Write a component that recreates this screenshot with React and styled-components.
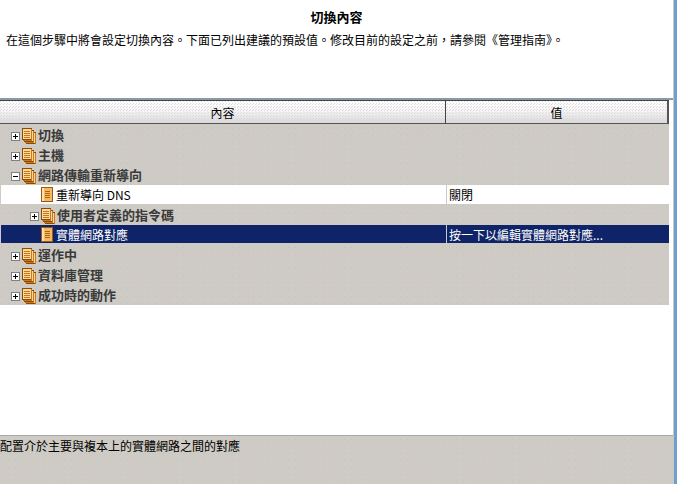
import React from "react";
import styled, { createGlobalStyle } from "styled-components";

const Global = createGlobalStyle`
  html, body { margin: 0; padding: 0; background: #fff; overflow: hidden; }
  * { box-sizing: border-box; }
`;

const speck = (c, x, y) => `radial-gradient(circle at ${x}.5px ${y}.5px, ${c} 0.7px, transparent 0.71px)`;

const dither = `
  background-color: #cdcbc3;
  background-image:
    ${speck("#e0c4cf", 0, 0)},
    ${speck("#c2d2c6", 2, 1)},
    ${speck("#d9c2c2", 3, 4)},
    ${speck("#bcc6c8", 1, 3)};
  background-size: 5px 5px, 5px 5px, 7px 7px, 7px 7px;
`;

const Page = styled.div`
  width: 677px;
  height: 484px;
  display: flex;
  font-family: "Noto Sans CJK TC", "Liberation Sans", sans-serif;
  font-size: 12px;
  color: #000;
`;
const Main = styled.div`
  width: 674px;
  display: flex;
  flex-direction: column;
  border-right: 1px solid #c8c8c4;
`;
const Edge = styled.div`
  width: 3px;
  background: #6f9fcf;
`;
const Intro = styled.div`
  height: 98px;
  padding: 7px 6px 0;
`;
const Title = styled.div`
  height: 19px;
  line-height: 19px;
  text-align: center;
  font-weight: 700;
  font-size: 13px;
`;
const Lead = styled.div`
  margin-top: 5px;
  line-height: 18px;
  white-space: nowrap;
`;
const Rule = styled.div`
  height: 2px;
  background: #8a99a8;
`;
const Body = styled.div`
  flex: 1;
  width: 669px;
  display: flex;
  flex-direction: column;
`;
const Header = styled.div`
  display: grid;
  grid-template-columns: 445px 1px 1fr;
  height: 25px;
  border-top: 1px solid #45454a;
  ${dither}
`;
const HeadCell = styled.div`
  height: 23px;
  line-height: 23px;
  text-align: center;
  background-color: #f0eef0;
  background-image:
    ${speck("#e4d8e0", 0, 0)},
    ${speck("#d8e0dc", 1, 2)},
    linear-gradient(#ffffff 0%, #f6f4f6 45%, #d8d8d8 100%);
  background-size: 3px 3px, 3px 3px, 100% 100%;
  border-bottom: 1px solid #555;
  border-right: ${(p) => (p.$last ? "2px solid #555" : "0")};
`;
const Sep = styled.div`
  height: 23px;
  background: #44444a;
`;
const Tree = styled.div`
  ${dither}
`;
const Row = styled.div`
  display: grid;
  grid-template-columns: 445px 1fr;
  height: ${(p) => (p.$kind === "selected" ? "18px" : p.$kind === "leaf" ? "19px" : "20px")};
  margin-bottom: ${(p) => (p.$kind === "selected" ? "2px" : p.$kind === "leaf" ? "1px" : "0")};
  margin-left: ${(p) => (p.$kind === "selected" || p.$kind === "leaf" ? "1px" : "0")};
  background: ${(p) => (p.$kind === "selected" ? "#0f2468" : p.$kind === "leaf" ? "#fff" : "transparent")};
  color: ${(p) => (p.$kind === "selected" ? "#fff" : p.$kind === "leaf" ? "#000" : "#3a3a3a")};
`;
const NameCell = styled.div`
  display: flex;
  align-items: center;
  padding-left: ${(p) => p.$indent}px;
  margin-left: ${(p) => (p.$leaf ? "-1px" : "0")};
  font-weight: ${(p) => (p.$group ? 700 : 400)};
  font-size: ${(p) => (p.$group ? "13px" : "12px")};
  white-space: nowrap;
`;
const Label = styled.span`
  margin-bottom: ${(p) => (p.$group ? "2px" : "0")};
`;
const ValueCell = styled.div`
  display: flex;
  align-items: center;
  padding-left: 2px;
  border-left: ${(p) => (p.$filled ? "1px solid #c8c8c8" : "0")};
  white-space: nowrap;
`;
const Expander = styled.span`
  width: 9px;
  height: 9px;
  margin-right: 2px;
  margin-top: 1px;
  flex: none;
  display: block;
`;
const IconWrap = styled.span`
  display: block;
  flex: none;
  margin-right: ${(p) => p.$gap}px;
  height: ${(p) => p.$h}px;
`;
const Blank = styled.div`
  flex: 1;
  background: #fff;
`;
const Footer = styled.div`
  height: 49px;
  border-top: 1px solid #a8a8a4;
  line-height: 20px;
  white-space: nowrap;
  ${dither}
`;

const Box = ({ open }) => (
  <Expander>
    <svg width="9" height="9" viewBox="0 0 9 9" style={{ display: "block" }} shapeRendering="crispEdges">
      <rect x="0.5" y="0.5" width="8" height="8" fill="#fff" stroke="#808080" />
      <path d="M2 4.5H7" stroke="#000" />
      {!open && <path d="M4.5 2V7" stroke="#000" />}
    </svg>
  </Expander>
);

const Sheet = ({ x, y }) => (
  <g>
    <rect x={x + 0.5} y={y + 0.5} width="9" height="11" fill="#fbd79a" stroke="#8a4a08" />
    <path d={`M${x + 9.5} ${y + 1}V${y + 12}H${x + 1}`} stroke="#c9781c" fill="none" />
  </g>
);

const Stack = () => (
  <IconWrap $gap={2} $h={16}>
    <svg width="14" height="16" viewBox="0 0 14 16" style={{ display: "block" }} shapeRendering="crispEdges">
      <Sheet x={4} y={4} />
      <Sheet x={2} y={2} />
      <Sheet x={0} y={0} />
      <path d="M2 3H8M2 5H8M2 7H8M2 9H8" stroke="#c27a1e" />
    </svg>
  </IconWrap>
);

const Leaf = () => (
  <IconWrap $gap={3} $h={15}>
    <svg width="12" height="15" viewBox="0 0 12 15" style={{ display: "block" }} shapeRendering="crispEdges">
      <rect x="0.5" y="0.5" width="11" height="14" fill="#f8b860" stroke="#9a5a14" />
      <rect x="1" y="1" width="2" height="13" fill="#fde0b0" />
      <path d="M4 4H9M4 6H9M4 8H9M4 10H9" stroke="#a8661a" />
    </svg>
  </IconWrap>
);

const rows = [
  { name: "切換", indent: 11, box: "closed" },
  { name: "主機", indent: 11, box: "closed" },
  { name: "網路傳輸重新導向", indent: 11, box: "open" },
  { name: "重新導向 DNS", indent: 41, kind: "leaf", value: "關閉" },
  { name: "使用者定義的指令碼", indent: 30, box: "closed" },
  { name: "實體網路對應", indent: 41, kind: "selected", value: "按一下以編輯實體網路對應..." },
  { name: "運作中", indent: 11, box: "closed" },
  { name: "資料庫管理", indent: 11, box: "closed" },
  { name: "成功時的動作", indent: 11, box: "closed" },
];

export default function App() {
  return (
    <Page>
      <Global />
      <Main>
        <Intro>
          <Title>切換內容</Title>
          <Lead>在這個步驟中將會設定切換內容。下面已列出建議的預設值。修改目前的設定之前，請參閱《管理指南》。</Lead>
        </Intro>
        <Rule />
        <Body>
          <Header>
            <HeadCell>內容</HeadCell>
            <Sep />
            <HeadCell $last>值</HeadCell>
          </Header>
          <Tree>
            {rows.map((r) => (
              <Row key={r.name} $kind={r.kind}>
                <NameCell $indent={r.indent} $group={!r.kind} $leaf={!!r.kind}>
                  {r.box ? <Box open={r.box === "open"} /> : null}
                  {r.kind ? <Leaf /> : <Stack />}
                  <Label $group={!r.kind}>{r.name}</Label>
                </NameCell>
                <ValueCell $filled={!!r.kind}>{r.value}</ValueCell>
              </Row>
            ))}
          </Tree>
          <Blank />
        </Body>
        <Footer>配置介於主要與複本上的實體網路之間的對應</Footer>
      </Main>
      <Edge />
    </Page>
  );
}
